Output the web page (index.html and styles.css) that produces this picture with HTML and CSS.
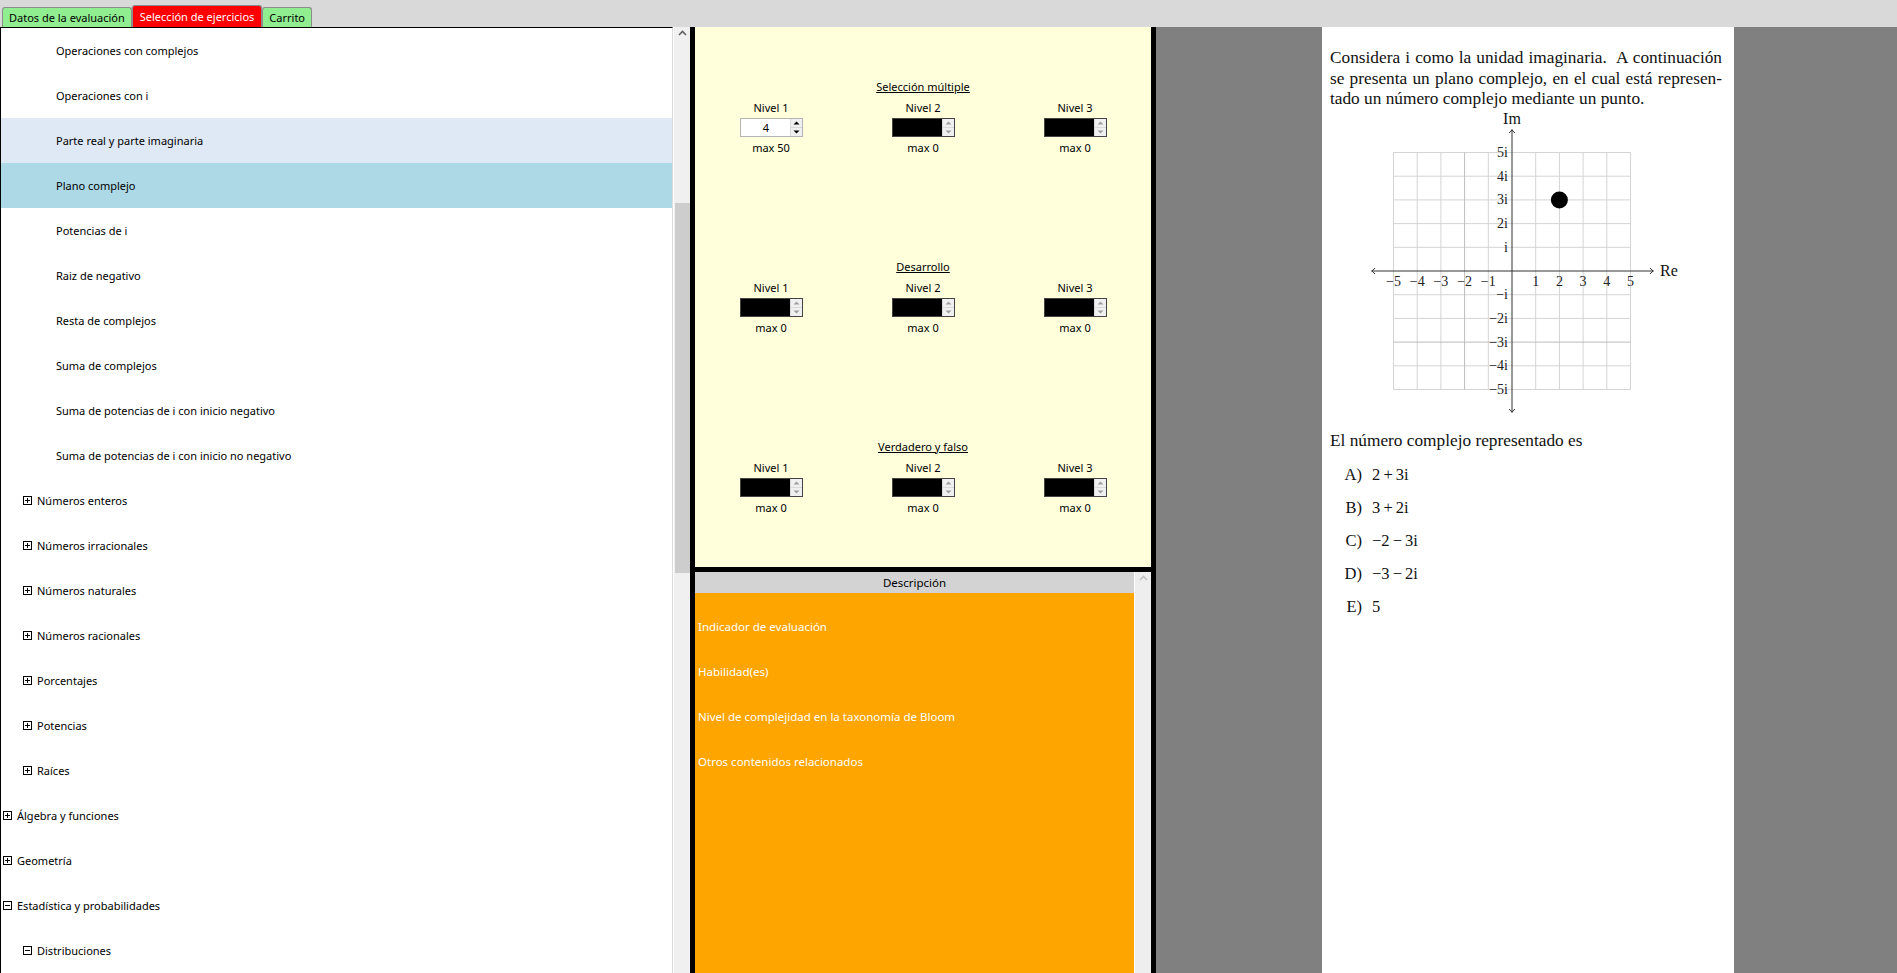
FILE: index.html
```html
<!DOCTYPE html>
<html lang="es">
<head>
<meta charset="utf-8">
<title>Selección de ejercicios</title>
<link rel="stylesheet" href="styles.css">
</head>
<body>
<div class="app">
  <div class="tabbar">
    <div class="tab tab-green">Datos de la evaluación</div>
    <div class="tab tab-red">Selección de ejercicios</div>
    <div class="tab tab-green">Carrito</div>
  </div>
  <div class="main">
    <div class="tree-wrap">
      <div class="tree">
        <div class="row lvl2">Operaciones con complejos</div>
        <div class="row lvl2">Operaciones con i</div>
        <div class="row lvl2 hover">Parte real y parte imaginaria</div>
        <div class="row lvl2 selected">Plano complejo</div>
        <div class="row lvl2">Potencias de i</div>
        <div class="row lvl2">Raiz de negativo</div>
        <div class="row lvl2">Resta de complejos</div>
        <div class="row lvl2">Suma de complejos</div>
        <div class="row lvl2">Suma de potencias de i con inicio negativo</div>
        <div class="row lvl2">Suma de potencias de i con inicio no negativo</div>
        <div class="row lvl1"><svg class="tg" viewBox="0 0 9 9"><rect x="0.5" y="0.5" width="8" height="8"/><path d="M2 4.5h5M4.5 2v5"/></svg>Números enteros</div>
        <div class="row lvl1"><svg class="tg" viewBox="0 0 9 9"><rect x="0.5" y="0.5" width="8" height="8"/><path d="M2 4.5h5M4.5 2v5"/></svg>Números irracionales</div>
        <div class="row lvl1"><svg class="tg" viewBox="0 0 9 9"><rect x="0.5" y="0.5" width="8" height="8"/><path d="M2 4.5h5M4.5 2v5"/></svg>Números naturales</div>
        <div class="row lvl1"><svg class="tg" viewBox="0 0 9 9"><rect x="0.5" y="0.5" width="8" height="8"/><path d="M2 4.5h5M4.5 2v5"/></svg>Números racionales</div>
        <div class="row lvl1"><svg class="tg" viewBox="0 0 9 9"><rect x="0.5" y="0.5" width="8" height="8"/><path d="M2 4.5h5M4.5 2v5"/></svg>Porcentajes</div>
        <div class="row lvl1"><svg class="tg" viewBox="0 0 9 9"><rect x="0.5" y="0.5" width="8" height="8"/><path d="M2 4.5h5M4.5 2v5"/></svg>Potencias</div>
        <div class="row lvl1"><svg class="tg" viewBox="0 0 9 9"><rect x="0.5" y="0.5" width="8" height="8"/><path d="M2 4.5h5M4.5 2v5"/></svg>Raíces</div>
        <div class="row lvl0"><svg class="tg" viewBox="0 0 9 9"><rect x="0.5" y="0.5" width="8" height="8"/><path d="M2 4.5h5M4.5 2v5"/></svg>Álgebra y funciones</div>
        <div class="row lvl0"><svg class="tg" viewBox="0 0 9 9"><rect x="0.5" y="0.5" width="8" height="8"/><path d="M2 4.5h5M4.5 2v5"/></svg>Geometría</div>
        <div class="row lvl0"><svg class="tg" viewBox="0 0 9 9"><rect x="0.5" y="0.5" width="8" height="8"/><path d="M2 4.5h5"/></svg>Estadística y probabilidades</div>
        <div class="row lvl1"><svg class="tg" viewBox="0 0 9 9"><rect x="0.5" y="0.5" width="8" height="8"/><path d="M2 4.5h5"/></svg>Distribuciones</div>
      </div>
      <div class="vscroll">
        <svg class="chev" viewBox="0 0 9 6"><path d="M1 5L4.5 1.5L8 5"/></svg>
        <div class="thumb"></div>
      </div>
    </div>

    <div class="middle">
      <div class="selection">
        <div class="section">
          <div class="sec-title">Selección múltiple</div>
          <div class="levels">
            <div class="level">
              <div class="lv-label">Nivel 1</div>
              <div class="spin">
                <div class="field">4</div>
                <div class="btns">
                  <div class="btn"><svg viewBox="0 0 7 4"><path d="M0.5 3.5L3.5 0.5L6.5 3.5Z"/></svg></div>
                  <div class="btn"><svg viewBox="0 0 7 4"><path d="M0.5 0.5L3.5 3.5L6.5 0.5Z"/></svg></div>
                </div>
              </div>
              <div class="lv-max">max 50</div>
            </div>
            <div class="level">
              <div class="lv-label">Nivel 2</div>
              <div class="spin off">
                <div class="field"></div>
                <div class="btns">
                  <div class="btn"><svg viewBox="0 0 7 4"><path d="M0.5 3.5L3.5 0.5L6.5 3.5Z"/></svg></div>
                  <div class="btn"><svg viewBox="0 0 7 4"><path d="M0.5 0.5L3.5 3.5L6.5 0.5Z"/></svg></div>
                </div>
              </div>
              <div class="lv-max">max 0</div>
            </div>
            <div class="level">
              <div class="lv-label">Nivel 3</div>
              <div class="spin off">
                <div class="field"></div>
                <div class="btns">
                  <div class="btn"><svg viewBox="0 0 7 4"><path d="M0.5 3.5L3.5 0.5L6.5 3.5Z"/></svg></div>
                  <div class="btn"><svg viewBox="0 0 7 4"><path d="M0.5 0.5L3.5 3.5L6.5 0.5Z"/></svg></div>
                </div>
              </div>
              <div class="lv-max">max 0</div>
            </div>
          </div>
        </div>

        <div class="section">
          <div class="sec-title">Desarrollo</div>
          <div class="levels">
            <div class="level">
              <div class="lv-label">Nivel 1</div>
              <div class="spin off">
                <div class="field"></div>
                <div class="btns">
                  <div class="btn"><svg viewBox="0 0 7 4"><path d="M0.5 3.5L3.5 0.5L6.5 3.5Z"/></svg></div>
                  <div class="btn"><svg viewBox="0 0 7 4"><path d="M0.5 0.5L3.5 3.5L6.5 0.5Z"/></svg></div>
                </div>
              </div>
              <div class="lv-max">max 0</div>
            </div>
            <div class="level">
              <div class="lv-label">Nivel 2</div>
              <div class="spin off">
                <div class="field"></div>
                <div class="btns">
                  <div class="btn"><svg viewBox="0 0 7 4"><path d="M0.5 3.5L3.5 0.5L6.5 3.5Z"/></svg></div>
                  <div class="btn"><svg viewBox="0 0 7 4"><path d="M0.5 0.5L3.5 3.5L6.5 0.5Z"/></svg></div>
                </div>
              </div>
              <div class="lv-max">max 0</div>
            </div>
            <div class="level">
              <div class="lv-label">Nivel 3</div>
              <div class="spin off">
                <div class="field"></div>
                <div class="btns">
                  <div class="btn"><svg viewBox="0 0 7 4"><path d="M0.5 3.5L3.5 0.5L6.5 3.5Z"/></svg></div>
                  <div class="btn"><svg viewBox="0 0 7 4"><path d="M0.5 0.5L3.5 3.5L6.5 0.5Z"/></svg></div>
                </div>
              </div>
              <div class="lv-max">max 0</div>
            </div>
          </div>
        </div>

        <div class="section">
          <div class="sec-title">Verdadero y falso</div>
          <div class="levels">
            <div class="level">
              <div class="lv-label">Nivel 1</div>
              <div class="spin off">
                <div class="field"></div>
                <div class="btns">
                  <div class="btn"><svg viewBox="0 0 7 4"><path d="M0.5 3.5L3.5 0.5L6.5 3.5Z"/></svg></div>
                  <div class="btn"><svg viewBox="0 0 7 4"><path d="M0.5 0.5L3.5 3.5L6.5 0.5Z"/></svg></div>
                </div>
              </div>
              <div class="lv-max">max 0</div>
            </div>
            <div class="level">
              <div class="lv-label">Nivel 2</div>
              <div class="spin off">
                <div class="field"></div>
                <div class="btns">
                  <div class="btn"><svg viewBox="0 0 7 4"><path d="M0.5 3.5L3.5 0.5L6.5 3.5Z"/></svg></div>
                  <div class="btn"><svg viewBox="0 0 7 4"><path d="M0.5 0.5L3.5 3.5L6.5 0.5Z"/></svg></div>
                </div>
              </div>
              <div class="lv-max">max 0</div>
            </div>
            <div class="level">
              <div class="lv-label">Nivel 3</div>
              <div class="spin off">
                <div class="field"></div>
                <div class="btns">
                  <div class="btn"><svg viewBox="0 0 7 4"><path d="M0.5 3.5L3.5 0.5L6.5 3.5Z"/></svg></div>
                  <div class="btn"><svg viewBox="0 0 7 4"><path d="M0.5 0.5L3.5 3.5L6.5 0.5Z"/></svg></div>
                </div>
              </div>
              <div class="lv-max">max 0</div>
            </div>
          </div>
        </div>
      </div>

      <div class="desc">
        <div class="desc-content">
          <div class="desc-head">Descripción</div>
          <div class="desc-body">
            <div class="desc-item">Indicador de evaluación</div>
            <div class="desc-item">Habilidad(es)</div>
            <div class="desc-item">Nivel de complejidad en la taxonomía de Bloom</div>
            <div class="desc-item">Otros contenidos relacionados</div>
          </div>
        </div>
        <div class="desc-scroll">
          <svg class="chev light" viewBox="0 0 9 6"><path d="M1 5L4.5 1.5L8 5"/></svg>
        </div>
      </div>
    </div>

    <div class="viewer">
      <div class="page">
        <div class="para">
          <div class="ln">Considera i como la unidad imaginaria.&nbsp; A continuación</div>
          <div class="ln">se presenta un plano complejo, en el cual está represen-</div>
          <div class="ln last">tado un número complejo mediante un punto.</div>
        </div>
        <svg class="graph" viewBox="0 0 412 315" width="412" height="315">
          <g class="grid">
            <path d="M71.5 47.5V284.5M95.2 47.5V284.5M118.9 47.5V284.5M166.3 47.5V284.5M213.7 47.5V284.5M237.4 47.5V284.5M261.1 47.5V284.5M284.8 47.5V284.5M308.5 47.5V284.5"/>
            <path d="M71.5 47.5H308.5M71.5 71.2H308.5M71.5 94.9H308.5M71.5 118.6H308.5M71.5 142.3H308.5M71.5 189.7H308.5M71.5 213.4H308.5M71.5 260.8H308.5M71.5 284.5H308.5"/>
            <path class="dk" d="M142.6 47.5V284.5M71.5 237.1H308.5"/>
          </g>
          <g class="axes">
            <path d="M50 166H331M190 25V307"/>
            <path d="M53 163Q51 165.5 49.5 166Q51 166.5 53 169"/>
            <path d="M328 163Q330 165.5 331.5 166Q330 166.5 328 169"/>
            <path d="M187 28Q189.5 26 190 24.5Q190.5 26 193 28"/>
            <path d="M187 304Q189.5 306 190 307.5Q190.5 306 193 304"/>
          </g>
          <circle cx="237.4" cy="94.9" r="8.5"/>
          <g class="ticks xt">
            <text x="71.5" y="181">−5</text>
            <text x="95.2" y="181">−4</text>
            <text x="118.9" y="181">−3</text>
            <text x="142.6" y="181">−2</text>
            <text x="166.3" y="181">−1</text>
            <text x="213.7" y="181">1</text>
            <text x="237.4" y="181">2</text>
            <text x="261.1" y="181">3</text>
            <text x="284.8" y="181">4</text>
            <text x="308.5" y="181">5</text>
          </g>
          <g class="ticks yt">
            <text x="186" y="52">5i</text>
            <text x="186" y="75.7">4i</text>
            <text x="186" y="99.4">3i</text>
            <text x="186" y="123.1">2i</text>
            <text x="186" y="146.8">i</text>
            <text x="186" y="194.2">−i</text>
            <text x="186" y="217.9">−2i</text>
            <text x="186" y="241.6">−3i</text>
            <text x="186" y="265.3">−4i</text>
            <text x="186" y="289">−5i</text>
          </g>
          <text class="axlabel" x="190" y="19" text-anchor="middle">Im</text>
          <text class="axlabel" x="338" y="171">Re</text>
        </svg>
        <div class="question">El número complejo representado es</div>
        <div class="options">
          <div class="opt"><span class="lab">A)</span><span class="val">2 + 3i</span></div>
          <div class="opt"><span class="lab">B)</span><span class="val">3 + 2i</span></div>
          <div class="opt"><span class="lab">C)</span><span class="val">−2 − 3i</span></div>
          <div class="opt"><span class="lab">D)</span><span class="val">−3 − 2i</span></div>
          <div class="opt"><span class="lab">E)</span><span class="val">5</span></div>
        </div>
      </div>
    </div>
  </div>
</div>
</body>
</html>
```

FILE: styles.css
```css
* { box-sizing: border-box; }
html, body {
  margin: 0;
  padding: 0;
  width: 1897px;
  height: 973px;
  overflow: hidden;
  font-family: "Noto Sans", "Open Sans", sans-serif;
  font-size: 11px;
  color: #000;
  background: #d9d9d9;
}
.app {
  display: flex;
  flex-direction: column;
  height: 973px;
}

/* Tabs */
.tabbar {
  height: 27px;
  flex: 0 0 27px;
  background: #d9d9d9;
  display: flex;
  align-items: flex-end;
  padding-left: 2px;
}
.tab {
  height: 20px;
  padding: 0 6px;
  display: flex;
  align-items: center;
  border: 1px solid #8c8c8c;
  border-bottom: none;
  border-radius: 3px 3px 0 0;
  font-size: 11px;
  white-space: nowrap;
}
.tab-green { background: #90ee90; color: #000; }
.tab-red {
  background: #ff0000;
  color: #fff;
  height: 22px;
  padding: 0 7px;
}

/* Main area */
.main {
  flex: 1;
  display: flex;
  min-height: 0;
}

/* Tree */
.tree-wrap {
  flex: 0 0 690px;
  display: flex;
  background: #fff;
}
.tree {
  flex: 0 0 673px;
  border-left: 1px solid #000;
  border-top: 1px solid #000;
  border-right: 1px solid #dcdcdc;
  background: #fff;
  overflow: hidden;
}
.row {
  height: 45px;
  display: flex;
  align-items: center;
  white-space: nowrap;
  font-size: 11px;
}
.row.lvl2 { padding-left: 55px; }
.row.lvl1 { padding-left: 22px; }
.row.lvl0 { padding-left: 2px; }
.row.hover { background: #dee9f5; }
.row.selected { background: #add8e6; }
.tg {
  width: 9px;
  height: 9px;
  margin-right: 5px;
  flex: 0 0 9px;
  fill: none;
  stroke: #000;
  stroke-width: 1;
  shape-rendering: crispEdges;
}
.vscroll {
  flex: 0 0 17px;
  background: #f0f0f0;
  border-left: 1px solid #fff;
  display: flex;
  flex-direction: column;
  align-items: center;
}
.chev {
  width: 9px;
  height: 6px;
  margin-top: 3px;
  fill: none;
  stroke: #606060;
  stroke-width: 1.6;
}
.chev.light { stroke: #c2c2c2; }
.thumb {
  width: 15px;
  height: 370px;
  margin-top: 167px;
  background: #cdcdcd;
}

/* Middle */
.middle {
  flex: 0 0 466px;
  display: flex;
  flex-direction: column;
  border-left: 5px solid #000;
  border-right: 5px solid #000;
  background: #000;
}
.selection {
  flex: 0 0 540px;
  background: #ffffdc;
  display: flex;
  flex-direction: column;
}
.section {
  height: 180px;
  display: flex;
  flex-direction: column;
  justify-content: center;
  align-items: center;
}
.sec-title {
  line-height: 16px;
  height: 16px;
  text-decoration: underline;
  font-size: 11px;
}
.levels {
  display: flex;
  width: 456px;
  margin-top: 5px;
}
.level {
  flex: 1;
  display: flex;
  flex-direction: column;
  align-items: center;
}
.lv-label { line-height: 16px; height: 16px; }
.lv-max { line-height: 16px; height: 16px; margin-top: 3px; }
.spin {
  margin-top: 2px;
  width: 63px;
  height: 19px;
  display: flex;
  border: 1px solid #b4b4b4;
  background: #fff;
}
.spin .field {
  flex: 1;
  text-align: center;
  line-height: 17px;
  font-size: 11px;
  padding-left: 2px;
}
.spin .btns {
  flex: 0 0 12px;
  display: flex;
  flex-direction: column;
  background: #f0f0f0;
  border-left: 1px solid #dadada;
}
.spin .btn {
  flex: 1;
  display: flex;
  align-items: center;
  justify-content: center;
}
.spin .btn + .btn { border-top: 1px solid #dadada; }
.spin .btn svg {
  width: 7px;
  height: 4px;
  fill: #000;
}
.spin.off {
  border: 1px solid #444;
  background: #000;
}
.spin.off .field { background: #000; }
.spin.off .btn svg { fill: #a0a0a0; }

/* Description */
.desc {
  flex: 1;
  display: flex;
  margin-top: 5px;
  background: #fff;
  min-height: 0;
}
.desc-content {
  flex: 0 0 439px;
  display: flex;
  flex-direction: column;
}
.desc-head {
  height: 21px;
  flex: 0 0 21px;
  background: #d3d3d3;
  text-align: center;
  line-height: 21px;
  font-size: 11.5px;
}
.desc-body {
  flex: 1;
  background: #ffa500;
  padding-top: 11px;
}
.desc-item {
  height: 45px;
  line-height: 45px;
  color: #fff;
  padding-left: 3px;
  font-size: 11.5px;
}
.desc-scroll {
  flex: 0 0 16px;
  margin-left: 1px;
  background: #eeeeee;
  display: flex;
  flex-direction: column;
  align-items: center;
}

/* Viewer */
.viewer {
  flex: 1;
  background: #808080;
  display: flex;
}
.page {
  width: 412px;
  margin-left: 166px;
  background: #fff;
  padding-top: 21px;
  font-family: "Liberation Serif", "Times New Roman", serif;
  font-size: 17.3px;
  color: #111;
}
.para { padding: 0 12px 0 8px; }
.ln {
  line-height: 20.5px;
  text-align: justify;
  text-align-last: justify;
  white-space: nowrap;
}
.ln.last { text-align-last: left; }
.graph {
  display: block;
  margin-top: -5px;
}
.grid path {
  fill: none;
  stroke: #d4d4d4;
  stroke-width: 1;
}
.grid path.dk { stroke: #bdbdbd; }
.axes path {
  fill: none;
  stroke: #333;
  stroke-width: 1;
}
.graph circle { fill: #000; }
.ticks text {
  font-family: "Liberation Serif", serif;
  font-size: 14px;
  fill: #222;
}
.xt text { text-anchor: middle; }
.yt text { text-anchor: end; }
.axlabel {
  font-family: "Liberation Serif", serif;
  font-size: 16px;
  fill: #111;
}
.question {
  padding-left: 8px;
  line-height: 20px;
  margin-top: 11px;
}
.options { margin-top: 7px; }
.opt {
  display: flex;
  height: 33px;
  line-height: 33px;
  font-size: 16.5px;
}
.opt .lab {
  width: 40px;
  text-align: right;
}
.opt .val {
  margin-left: 10px;
  word-spacing: -1px;
}
```
